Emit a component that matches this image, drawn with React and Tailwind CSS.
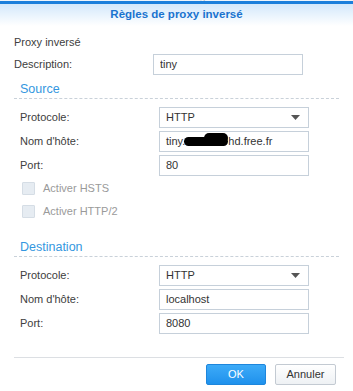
import React, { useState } from "react";

const font = { fontFamily: '"Liberation Sans", Arial, sans-serif' };

const Field = ({ label, children, indent }) => (
  <div className={`flex items-center h-[24px] ${indent ? "pl-[20px]" : "pl-[14px]"}`}>
    <label className="w-[139px] text-[11px] text-[#404040]">{label}</label>
    {children}
  </div>
);

const TextInput = ({ value }) => (
  <input
    type="text"
    defaultValue={value}
    className="w-[150px] h-[21px] border border-[#c6d0da] bg-white px-[6px] text-[11px] text-[#333] outline-none"
  />
);

const Select = ({ value }) => (
  <div className="w-[150px] h-[21px] border border-[#c6d0da] bg-white flex items-center justify-between pl-[6px] pr-[8px]">
    <span className="text-[11px] text-[#333]">{value}</span>
    <svg width="9" height="5" viewBox="0 0 9 5">
      <path d="M0 0h9L4.5 5z" fill="#555" />
    </svg>
  </div>
);

const Checkbox = ({ label }) => (
  <div className="flex items-center h-[23px] pl-[22px]">
    <span className="w-[13px] h-[13px] border border-[#d5dde5] bg-[#e6ecf2] rounded-[1px]" />
    <span className="ml-[8px] text-[11px] text-[#9a9a9a]">{label}</span>
  </div>
);

const Section = ({ title }) => (
  <div className="mx-[14px] pl-[6px] border-b border-dashed border-[#c9d1d9] h-[23px] flex items-end pb-[1px]">
    <span className="text-[12.5px] leading-[15px] text-[#3497e0]">{title}</span>
  </div>
);

export default function App() {
  const [host] = useState("tiny.");
  return (
    <div className="w-[353px] h-[391px] bg-white overflow-hidden flex flex-col" style={font}>
      <div className="h-[1px] overflow-hidden bg-[#eef4fa] flex justify-center">
        <span className="text-[11px] text-[#b4bec8] -mt-[9px] leading-[11px]">Panneau de configuration</span>
      </div>
      <div className="h-[3px] bg-[#1b7fdb]" />
      <div className="h-[22px] bg-gradient-to-b from-[#d3e8fb] to-white flex items-center justify-center">
        <span className="text-[11.5px] font-bold text-[#1a73cf]">Règles de proxy inversé</span>
      </div>

      <div className="pl-[14px] pt-[8px] h-[26px] text-[11px] text-[#404040]">Proxy inversé</div>
      <Field label="Description:">
        <TextInput value="tiny" />
      </Field>

      <Section title="Source" />
      <div className="h-[6px]" />
      <Field label="Protocole:" indent>
        <Select value="HTTP" />
      </Field>
      <Field label="Nom d'hôte:" indent>
        <div className="relative w-[150px] h-[21px] border border-[#c6d0da] bg-white flex items-center px-[6px] text-[11px] text-[#333]">
          <span>{host}</span>
          <span className="w-[44px] h-[9px] bg-black rounded-full -ml-[1px]" />
          <span className="absolute left-[44px] top-[1px] w-[24px] h-[10px] bg-black rounded-full" />
          <span>hd.free.fr</span>
        </div>
      </Field>
      <Field label="Port:" indent>
        <TextInput value="80" />
      </Field>
      <Checkbox label="Activer HSTS" />
      <Checkbox label="Activer HTTP/2" />

      <div className="h-[11px]" />
      <Section title="Destination" />
      <div className="h-[6px]" />
      <Field label="Protocole:" indent>
        <Select value="HTTP" />
      </Field>
      <Field label="Nom d'hôte:" indent>
        <TextInput value="localhost" />
      </Field>
      <Field label="Port:" indent>
        <TextInput value="8080" />
      </Field>

      <div className="mt-[22px] ml-[14px] mr-[9px] border-t border-[#dcdfe3]" />
      <div className="flex justify-end gap-[9px] pr-[17px] pt-[6px]">
        <button className="w-[60px] h-[21px] border border-[#1e86dc] bg-gradient-to-b from-[#3dabf8] to-[#1e91ec] text-white text-[11px] rounded-[2px]">
          OK
        </button>
        <button className="w-[61px] h-[21px] border border-[#c3cad2] bg-gradient-to-b from-white to-[#eef1f4] text-[#333] text-[11px] rounded-[2px]">
          Annuler
        </button>
      </div>
    </div>
  );
}
